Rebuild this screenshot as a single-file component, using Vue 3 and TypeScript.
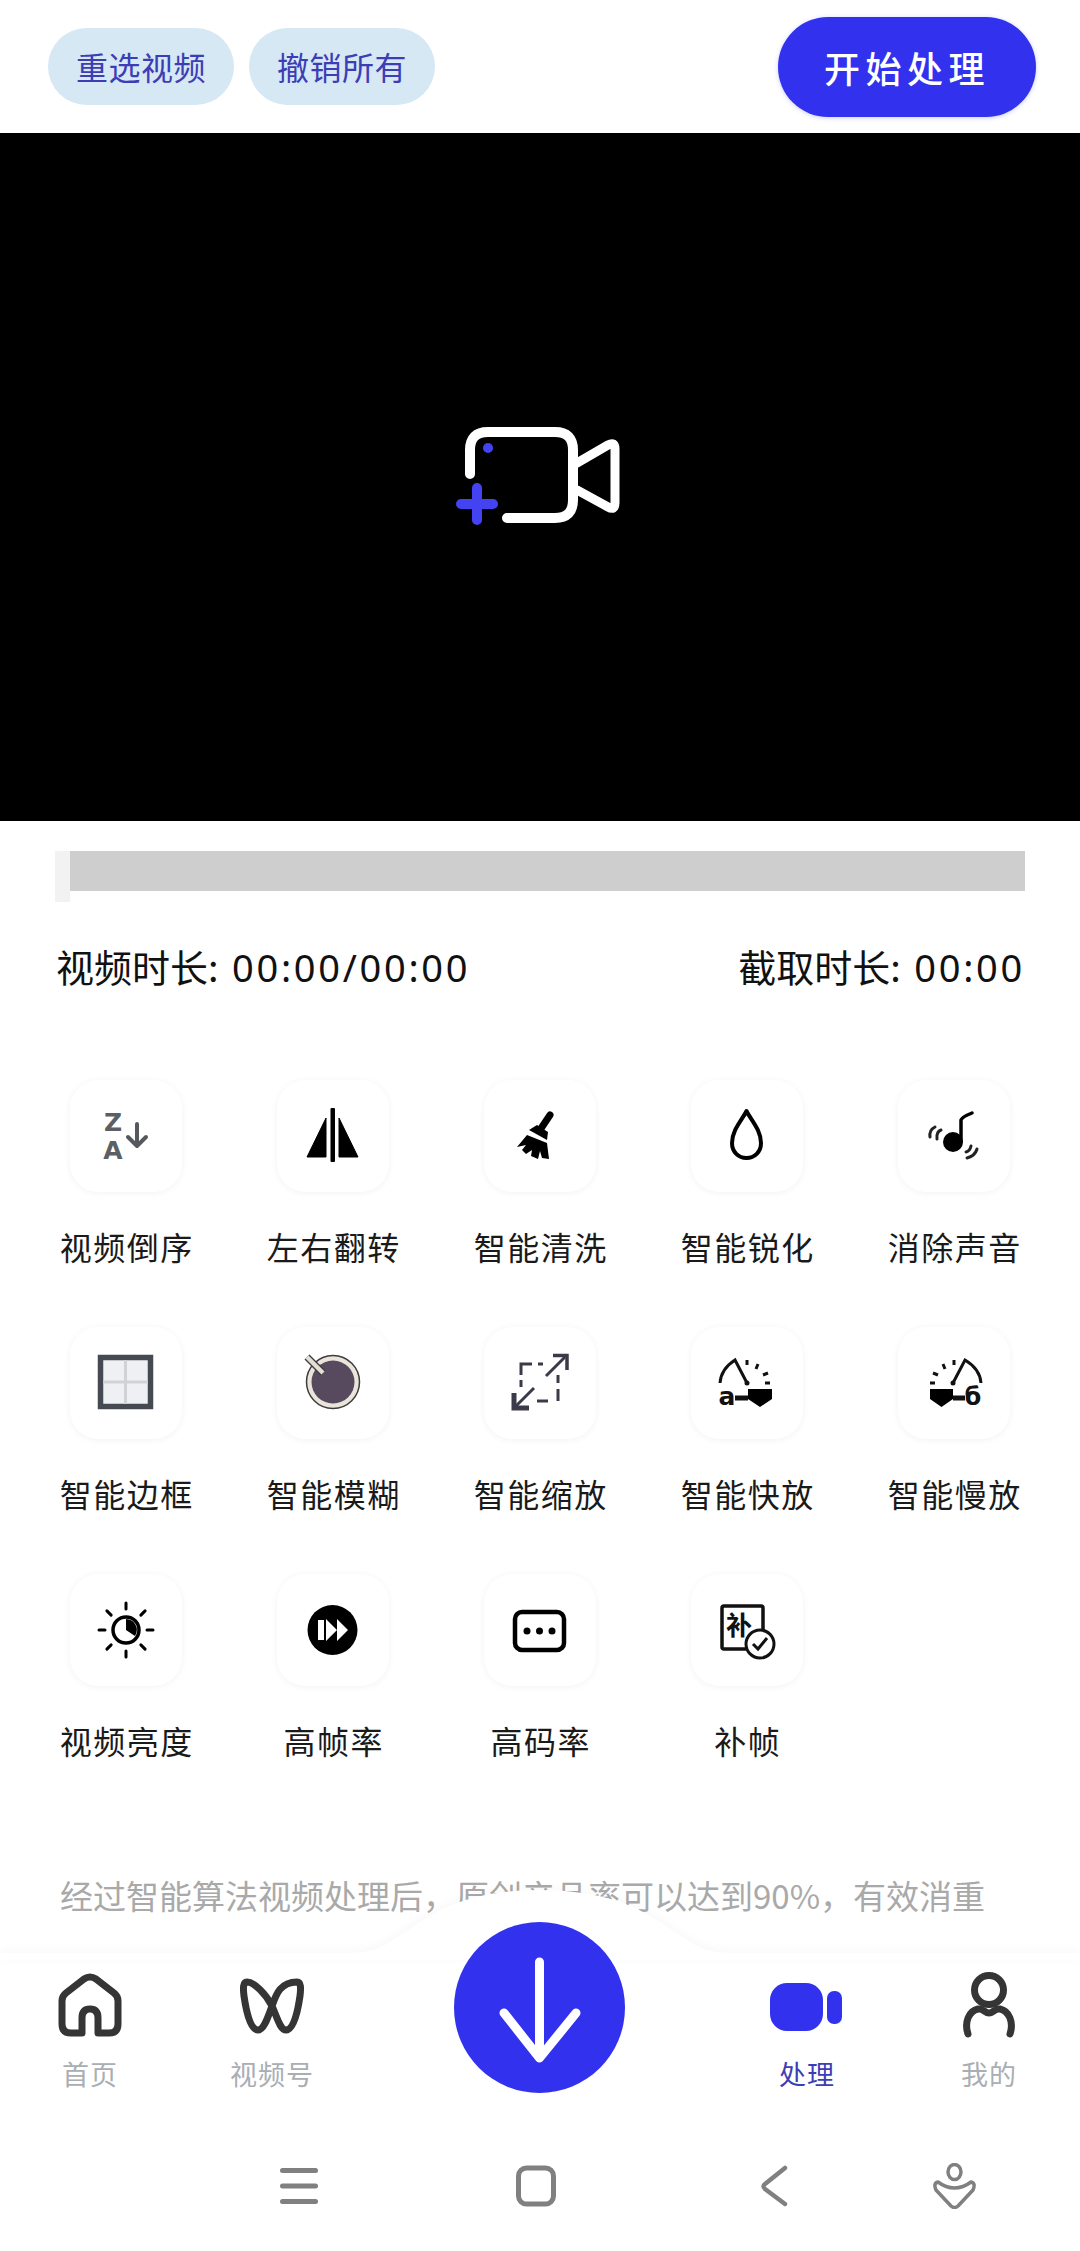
<script setup lang="ts">
const tools = [
  { name: '视频倒序', icon: 'reverse' },
  { name: '左右翻转', icon: 'flip' },
  { name: '智能清洗', icon: 'broom' },
  { name: '智能锐化', icon: 'drop' },
  { name: '消除声音', icon: 'mute' },
  { name: '智能边框', icon: 'frame' },
  { name: '智能模糊', icon: 'blur' },
  { name: '智能缩放', icon: 'zoom' },
  { name: '智能快放', icon: 'fast' },
  { name: '智能慢放', icon: 'slow' },
  { name: '视频亮度', icon: 'sun' },
  { name: '高帧率', icon: 'fps' },
  { name: '高码率', icon: 'bitrate' },
  { name: '补帧', icon: 'fill' },
]

const sunRays = [0, 45, 90, 135, 180, 225, 270, 315]
</script>

<template>
  <div class="page">
    <header class="top">
      <button class="pill">重选视频</button>
      <button class="pill">撤销所有</button>
      <button class="start">开始处理</button>
    </header>

    <section class="player">
      <svg width="180" height="110" viewBox="450 422 180 110" fill="none" stroke-linecap="round" stroke-linejoin="round">
        <path d="M470 474V450Q470 432 488 432H555Q573 432 573 450V500Q573 518 555 518H507" stroke="#fff" stroke-width="10" />
        <path d="M577 463L608 445Q615 441 615 449V503Q615 511 608 507L577 490" stroke="#fff" stroke-width="9" />
        <path d="M477 488V520M461 504H493" stroke="#4343f2" stroke-width="10" />
        <circle cx="488" cy="448" r="5" fill="#4343f2" />
      </svg>
    </section>

    <div class="track">
      <div class="handle"></div>
      <div class="bar"></div>
    </div>

    <div class="times">
      <span>视频时长: <span class="num">00:00/00:00</span></span>
      <span>截取时长: <span class="num">00:00</span></span>
    </div>

    <div class="tools">
      <div v-for="t in tools" :key="t.name" class="tool">
        <div class="card">
          <svg width="112" height="112" viewBox="0 0 112 112" fill="none">
            <g v-if="t.icon === 'reverse'">
              <text x="43" y="51" class="glyph" font-size="25" fill="#5c5f63">Z</text>
              <text x="43" y="79" class="glyph" font-size="25" fill="#5c5f63">A</text>
              <path d="M67 44V66M58 57L67 66L76 57" stroke="#55585c" stroke-width="4" stroke-linecap="round" stroke-linejoin="round" />
            </g>
            <g v-else-if="t.icon === 'flip'" fill="#000">
              <rect x="53.500" y="28" width="4.500" height="54" rx="1" />
              <path d="M30 77L49 38V77Z M62 38L81 77H62Z" stroke="#000" stroke-width="1" stroke-linejoin="round" />
            </g>
            <g v-else-if="t.icon === 'broom'">
              <path d="M66 35L56 50" stroke="#000" stroke-width="7" stroke-linecap="round" />
              <path d="M45 50L53 45L64 52L63 60Z" fill="#000" />
              <path d="M43 55L63 63L65 79L58 78L56 71L54 79L47 76L48 70L42 74L38 70L42 65L33 67Z" fill="#000" />
            </g>
            <path v-else-if="t.icon === 'drop'" d="M55.500 31C60 40 70 50 70 63C70 72 63.500 78 55.500 78C47.500 78 41 72 41 63C41 50 51 40 55.500 31Z" stroke="#000" stroke-width="4" stroke-linejoin="round" />
            <g v-else-if="t.icon === 'mute'">
              <circle cx="55" cy="62" r="10" fill="#000" />
              <path d="M63 62V40Q64 37 74 33" stroke="#000" stroke-width="3.500" stroke-linecap="round" />
              <path d="M43 50Q38 52 39 59M37 47Q31 50 32 57M68 72Q72 71 73 66M69 78Q77 76 79 69" stroke="#222" stroke-width="3" stroke-linecap="round" />
            </g>
            <g v-else-if="t.icon === 'frame'">
              <rect x="30.500" y="30.500" width="50" height="49" fill="#eef0f4" stroke="#454a52" stroke-width="5.500" />
              <path d="M55.500 33V77M33 55H78" stroke="#cfd3d8" stroke-width="3" />
            </g>
            <g v-else-if="t.icon === 'blur'">
              <circle cx="56" cy="55" r="26.500" fill="#e9e5da" stroke="#3f3b3e" stroke-width="1.500" />
              <circle cx="56" cy="55" r="21.500" fill="#574a5e" />
              <path d="M30 30L46 46" stroke="#3f3b3e" stroke-width="7" />
              <path d="M30 30L46 46" stroke="#e3dfd4" stroke-width="4.500" />
            </g>
            <g v-else-if="t.icon === 'zoom'" stroke="#3a3a48">
              <path d="M37 48V37H48M54 37H59M37 53V60M53 74H64M74 74V62M74 56V48" stroke-width="3" />
              <path d="M31 80L50 61M62 49L81 30" stroke-width="3" />
              <path d="M30 66V81H45" stroke-width="5" />
              <path d="M69 28.500H83V43" stroke-width="3.500" />
            </g>
            <g v-else-if="t.icon === 'fast'">
              <path d="M29 56Q30 42 44 33L56 56" stroke="#111" stroke-width="3" />
              <circle cx="56" cy="56" r="2.500" fill="#111" />
              <path d="M56 33V38M67 37L65 42M77 46L72 48M79 56H74" stroke="#111" stroke-width="3" />
              <path d="M57 62H81V72L69 80L57 72Z" fill="#000" />
              <path d="M44 71H57" stroke="#111" stroke-width="5" />
              <text x="36" y="78" class="glyph" font-size="25" fill="#111">a</text>
            </g>
            <g v-else-if="t.icon === 'slow'">
              <path d="M83 56Q82 42 67 33L55 56" stroke="#111" stroke-width="3" />
              <circle cx="55" cy="56" r="2.500" fill="#111" />
              <path d="M56 33V38M45 37L47 42M35 46L40 48M32 56H37" stroke="#111" stroke-width="3" />
              <path d="M32 62H55V72L43.500 80L32 72Z" fill="#000" />
              <path d="M55 71H67" stroke="#111" stroke-width="5" />
              <text x="75" y="78" class="glyph" font-size="24" fill="#111">б</text>
            </g>
            <g v-else-if="t.icon === 'sun'">
              <circle cx="56" cy="56" r="13" stroke="#000" stroke-width="3.500" />
              <path d="M56 45A11 11 0 0 1 65 62L56 56Z" fill="#000" />
              <path
                v-for="a in sunRays"
                :key="a"
                d="M56 29V35"
                stroke="#000"
                stroke-width="3"
                stroke-linecap="round"
                :transform="`rotate(${a} 56 56)`"
              />
            </g>
            <g v-else-if="t.icon === 'fps'">
              <circle cx="55.500" cy="56" r="25" fill="#000" />
              <path d="M41 46H47V66H41Z M49 45L60 56L49 67Z M60 45L71 56L60 67Z" fill="#fff" />
            </g>
            <g v-else-if="t.icon === 'bitrate'">
              <rect x="31" y="38" width="49" height="38" rx="7" stroke="#000" stroke-width="4.500" />
              <circle cx="43" cy="57" r="3.500" fill="#000" />
              <circle cx="55.500" cy="57" r="3.500" fill="#000" />
              <circle cx="68" cy="57" r="3.500" fill="#000" />
            </g>
            <g v-else-if="t.icon === 'fill'">
              <rect x="31" y="32" width="41" height="43" rx="2" stroke="#111" stroke-width="3.500" />
              <text x="48" y="61" class="glyph" font-size="26" fill="#111">补</text>
              <circle cx="69" cy="70" r="14" fill="#fff" stroke="#111" stroke-width="3" />
              <path d="M62 70L67 75L76 64" stroke="#111" stroke-width="3" />
            </g>
          </svg>
        </div>
        <div class="tool-name">{{ t.name }}</div>
      </div>
    </div>

    <p class="desc">经过智能算法视频处理后，原创产品率可以达到90%，有效消重</p>

    <footer class="nav">
      <svg class="hump" width="1080" height="80" viewBox="0 0 1080 80">
        <path d="M0 73H340C360 73 372 72 385 65C410 50 430 32 460 22C485 13 515 10 540 10C565 10 595 13 620 22C650 32 670 50 695 65C708 72 720 73 740 73H1080V80H0Z" fill="#fff" />
      </svg>
      <div class="fab">
        <svg width="172" height="172" viewBox="0 0 172 172" fill="none" stroke="#fff" stroke-width="9" stroke-linecap="round" stroke-linejoin="round">
          <path d="M85.500 40V132M50 91L85.500 136L122 91" />
        </svg>
      </div>

      <div class="tabs">
        <div class="tab">
          <svg width="80" height="70" viewBox="0 0 80 70" fill="none" stroke="#353535" stroke-width="7" stroke-linejoin="round">
            <path d="M32 63H21Q12 63 12 54V31Q12 26 16 23L34 9Q40 5 46 9L64 23Q68 26 68 31V54Q68 63 59 63H48V48Q48 39 40 39Q32 39 32 48Z" />
          </svg>
          <span>首页</span>
        </div>
        <div class="tab">
          <svg width="80" height="70" viewBox="0 0 80 70" fill="none" stroke="#353535" stroke-width="7" stroke-linecap="round">
            <path d="M40 36C34 24 22 12 15 12C11 12 11 18 12 26C14 40 18 60 26 60C32 60 36 47 40 36C44 25 48 12 65 12C69 12 69 18 68 26C66 40 62 60 54 60C48 60 45 47 40 36Z" />
          </svg>
          <span>视频号</span>
        </div>
        <div></div>
        <div class="tab active">
          <svg width="80" height="70" viewBox="0 0 80 70" fill="#3232ee">
            <rect x="3" y="13" width="53" height="48" rx="17" />
            <rect x="60" y="21" width="15" height="33" rx="7" />
          </svg>
          <span>处理</span>
        </div>
        <div class="tab">
          <svg width="80" height="70" viewBox="0 0 80 70" fill="none" stroke="#353535" stroke-width="7" stroke-linecap="round">
            <circle cx="40" cy="20" r="14.500" />
            <path d="M19 64C15 52 20 41 29 39C34 38 36 43 40 43C44 43 46 38 51 39C60 41 65 52 61 64" />
          </svg>
          <span>我的</span>
        </div>
      </div>

      <div class="sysbar">
        <svg width="40" height="40" viewBox="0 0 40 40" fill="#808080">
          <rect x="1" y="2" width="38" height="5" rx="2.500" />
          <rect x="1" y="17.500" width="38" height="5" rx="2.500" />
          <rect x="1" y="33" width="38" height="5" rx="2.500" />
        </svg>
        <svg width="44" height="44" viewBox="0 0 44 44" fill="none" stroke="#808080" stroke-width="5">
          <rect x="4.500" y="4" width="35" height="36" rx="8" />
        </svg>
        <svg width="30" height="42" viewBox="0 0 30 42" fill="none" stroke="#808080" stroke-width="4.500" stroke-linecap="round" stroke-linejoin="round">
          <path d="M26 3L6 19Q3 21 6 24L26 39" />
        </svg>
        <svg width="46" height="46" viewBox="0 0 46 46" fill="none" stroke="#808080" stroke-width="3.500" stroke-linejoin="round">
          <ellipse cx="22.500" cy="9" rx="6.500" ry="7.500" />
          <path d="M6 19Q14 25 22.500 25Q31 25 39 19Q44 20 41 27L26 43Q22.500 46 19 43L4 27Q1 20 6 19Z" />
        </svg>
      </div>
    </footer>
  </div>
</template>

<style>
html,
body {
  margin: 0;
  background: #fff;
}
</style>

<style scoped>
.page {
  position: relative;
  width: 1080px;
  height: 2251px;
  overflow: hidden;
  background: #fff;
  font-family: "Noto Sans CJK SC", "Noto Sans", sans-serif;
  color: #1a1a1a;
}

.top {
  height: 133px;
  box-sizing: border-box;
  padding: 17px 44px 0 48px;
  display: flex;
  align-items: flex-start;
}

.pill {
  width: 186px;
  height: 77px;
  margin: 11px 15px 0 0;
  border: none;
  border-radius: 39px;
  background: #d5e8f4;
  color: #3d3db5;
  font: inherit;
  font-size: 32px;
  letter-spacing: 0.500px;
  line-height: 77px;
  padding: 0;
}

.start {
  width: 258px;
  height: 100px;
  margin-left: auto;
  border: none;
  border-radius: 50px;
  background: #3232ee;
  color: #fff;
  font: inherit;
  font-size: 36px;
  font-weight: 500;
  letter-spacing: 5.500px;
  padding: 0;
  box-shadow: 0 1px 4px rgba(50, 50, 238, 0.25);
}

.player {
  height: 688px;
  background: #000;
  display: flex;
  align-items: center;
  justify-content: center;
}

.track {
  margin: 30px 55px 0;
  height: 51px;
  display: flex;
}

.handle {
  width: 15px;
  height: 51px;
  background: #f2f2f2;
}

.bar {
  flex: 1;
  height: 40px;
  background: #cecece;
}

.times {
  margin: 36px 55px 0 56px;
  height: 56px;
  display: flex;
  justify-content: space-between;
  align-items: center;
  font-size: 38px;
  line-height: 56px;
  color: #111;
  white-space: nowrap;
}

.num {
  margin-left: 5px;
  font-family: "Noto Sans", sans-serif;
  letter-spacing: 2.700px;
}

.tools {
  margin-top: 86px;
  padding-left: 22.500px;
  display: grid;
  grid-template-columns: repeat(5, 207px);
  grid-auto-rows: 247px;
}

.tool {
  display: flex;
  flex-direction: column;
  align-items: center;
}

.card {
  width: 112px;
  height: 112px;
  border-radius: 28px;
  background: #fff;
  box-shadow: 0 1px 7px rgba(0, 0, 0, 0.05);
}

.card svg {
  display: block;
}

.glyph {
  font-family: "DejaVu Sans", "Noto Sans CJK SC", sans-serif;
  font-weight: 700;
  text-anchor: middle;
}

.tool-name {
  margin-top: 31px;
  padding-left: 1.500px;
  font-size: 32px;
  letter-spacing: 1.500px;
  line-height: 46px;
  color: #1a1a1a;
}

.desc {
  position: absolute;
  left: 60px;
  top: 1871px;
  margin: 0;
  font-size: 33px;
  line-height: 48px;
  color: #a9a9a9;
  white-space: nowrap;
}

.nav {
  position: absolute;
  left: 0;
  right: 0;
  bottom: 0;
  height: 298px;
  background: #fff;
}

.hump {
  position: absolute;
  left: 0;
  top: -73px;
  filter: drop-shadow(0 -2px 4px rgba(0, 0, 0, 0.03));
}

.fab {
  position: absolute;
  left: 454px;
  top: -31px;
  width: 171px;
  height: 171px;
  border-radius: 50%;
  background: #3232ee;
}

.fab svg {
  display: block;
}

.tabs {
  position: relative;
  margin-left: -1px;
  padding-top: 17px;
  display: grid;
  grid-template-columns: 182px 182px 1fr 182px 182px;
}

.tab {
  display: flex;
  flex-direction: column;
  align-items: center;
  font-size: 27px;
  letter-spacing: 1px;
  line-height: 38px;
  color: #a9aeb3;
}

.tab svg {
  display: block;
  margin-bottom: 15px;
}

.tab.active {
  color: #3d3db5;
}

.sysbar {
  position: absolute;
  left: 181px;
  top: 210px;
  display: grid;
  grid-template-columns: 235px 240px 235px 128px;
  justify-items: center;
  align-items: center;
}

.sysbar svg {
  display: block;
}
</style>
